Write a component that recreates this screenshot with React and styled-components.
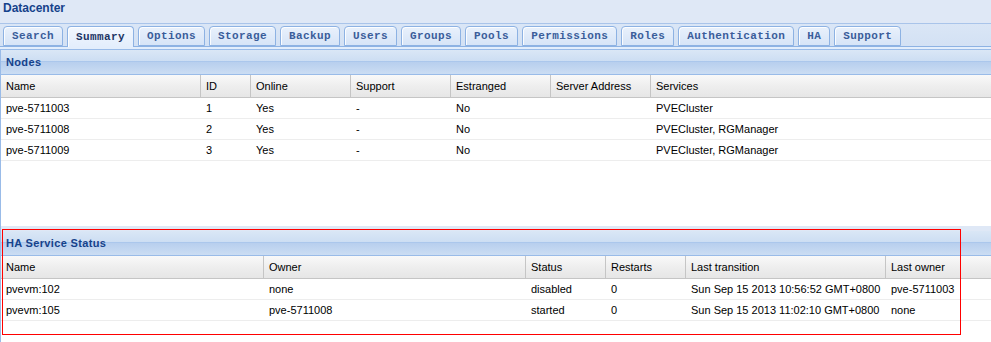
import React from "react";
import styled, { createGlobalStyle } from "styled-components";

const GlobalStyle = createGlobalStyle`
  html, body {
    margin: 0;
    padding: 0;
    background: #fff;
    overflow: hidden;
  }
`;

const tabs = [
  "Search",
  "Summary",
  "Options",
  "Storage",
  "Backup",
  "Users",
  "Groups",
  "Pools",
  "Permissions",
  "Roles",
  "Authentication",
  "HA",
  "Support",
];

const nodeCols = [
  { title: "Name", width: 200 },
  { title: "ID", width: 50 },
  { title: "Online", width: 100 },
  { title: "Support", width: 100 },
  { title: "Estranged", width: 100 },
  { title: "Server Address", width: 100 },
  { title: "Services" },
];

const nodeRows = [
  ["pve-5711003", "1", "Yes", "-", "No", "", "PVECluster"],
  ["pve-5711008", "2", "Yes", "-", "No", "", "PVECluster, RGManager"],
  ["pve-5711009", "3", "Yes", "-", "No", "", "PVECluster, RGManager"],
];

const haCols = [
  { title: "Name", width: 263 },
  { title: "Owner", width: 262 },
  { title: "Status", width: 80 },
  { title: "Restarts", width: 80 },
  { title: "Last transition", width: 200 },
  { title: "Last owner" },
];

const haRows = [
  ["pvevm:102", "none", "disabled", "0", "Sun Sep 15 2013 10:56:52 GMT+0800", "pve-5711003"],
  ["pvevm:105", "pve-5711008", "started", "0", "Sun Sep 15 2013 11:02:10 GMT+0800", "none"],
];

const Page = styled.div`
  width: 991px;
  height: 342px;
  display: flex;
  flex-direction: column;
  font-family: "Liberation Sans", Arial, sans-serif;
  font-size: 11px;
  background: #dfe8f6;
`;

const TitleBar = styled.div`
  height: 24px;
  box-sizing: border-box;
  padding: 1px 0 0 3px;
  font-weight: bold;
  font-size: 12px;
  color: #15428b;
  line-height: 14px;
  background: #dfe8f6;
  border-bottom: 1px solid #a9c4ea;
`;

const TabBar = styled.div`
  height: 22px;
  box-sizing: border-box;
  display: flex;
  align-items: flex-end;
  gap: 4px;
  padding-left: 3px;
  background: linear-gradient(#dae6f6, #d3e1f4);
`;

const Tab = styled.div`
  position: relative;
  z-index: ${(p) => (p.$active ? 2 : 1)};
  height: ${(p) => (p.$active ? "21px" : "20px")};
  margin-bottom: ${(p) => (p.$active ? "-1px" : "0")};
  box-sizing: border-box;
  padding: 0 8px;
  display: flex;
  align-items: center;
  border: 1px solid #8db2e3;
  border-bottom: ${(p) => (p.$active ? "none" : "1px solid #8db2e3")};
  border-radius: 4px 4px 0 0;
  box-shadow: inset 1px 1px 0 rgba(255, 255, 255, 0.85);
  background: ${(p) =>
    p.$active
      ? "linear-gradient(#f3f8fe, #e3eefc)"
      : "linear-gradient(#e9f1fc, #d6e4f7)"};
  font-family: "Liberation Mono", "Courier New", monospace;
  font-weight: bold;
  font-size: 11px;
  letter-spacing: 0.4px;
  color: ${(p) => (p.$active ? "#1d3564" : "#3a5d9a")};
  white-space: nowrap;
`;

const TabStrip = styled.div`
  height: 2px;
  border-top: 1px solid #8db2e3;
  border-bottom: 1px solid #99bbe8;
  background: #e3eefc;
`;

const Body = styled.div`
  flex: 1;
  display: flex;
  flex-direction: column;
  border-left: 1px solid #99bbe8;
  min-height: 0;
`;

const Panel = styled.section`
  position: relative;
  display: flex;
  flex-direction: column;
  background: #fff;
  height: ${(p) => (p.$height ? `${p.$height}px` : "auto")};
  flex: ${(p) => (p.$height ? "none" : "1")};
`;

const PanelHeader = styled.div`
  height: 25px;
  box-sizing: border-box;
  padding-left: 5px;
  display: flex;
  align-items: center;
  font-weight: bold;
  letter-spacing: 0.35px;
  color: #15428b;
  border-bottom: 1px solid #99bbe8;
  background: linear-gradient(
    #dae7f6,
    #cddef3 45%,
    #abc7ec 46%,
    #abc7ec 50%,
    #b8cfee 51%,
    #cbddf3
  );
`;

const Splitter = styled.div`
  height: 5px;
  background: #dfe8f6;
`;

const Row = styled.div`
  display: flex;
  height: ${(p) => (p.$head ? "23px" : "21px")};
  box-sizing: border-box;
  border-bottom: 1px solid ${(p) => (p.$head ? "#c5c5c5" : "#ededed")};
  background: ${(p) =>
    p.$head ? "linear-gradient(#f9f9f9, #eeeeee 50%, #e6e6e6)" : "#fff"};
`;

const Cell = styled.div`
  box-sizing: border-box;
  flex: ${(p) => (p.$width ? `0 0 ${p.$width}px` : "1")};
  padding-left: 5px;
  display: flex;
  align-items: center;
  color: #000;
  white-space: nowrap;
  overflow: hidden;
  border-right: ${(p) =>
    p.$head && p.$width ? "1px solid #c5c5c5" : "none"};
`;

const Highlight = styled.div`
  position: absolute;
  top: -2px;
  left: 1px;
  width: 959px;
  height: 106px;
  box-sizing: border-box;
  border: 1px solid #ff0000;
  pointer-events: none;
`;

const Grid = ({ cols, rows }) => (
  <div>
    <Row $head>
      {cols.map((c) => (
        <Cell key={c.title} $head $width={c.width}>
          {c.title}
        </Cell>
      ))}
    </Row>
    {rows.map((r, i) => (
      <Row key={i}>
        {r.map((v, j) => (
          <Cell key={j} $width={cols[j].width}>
            {v}
          </Cell>
        ))}
      </Row>
    ))}
  </div>
);

export default function App() {
  return (
    <>
      <GlobalStyle />
      <Page>
        <TitleBar>Datacenter</TitleBar>
        <TabBar>
          {tabs.map((t) => (
            <Tab key={t} $active={t === "Summary"}>
              {t}
            </Tab>
          ))}
        </TabBar>
        <TabStrip />
        <Body>
          <Panel $height={176}>
            <PanelHeader>Nodes</PanelHeader>
            <Grid cols={nodeCols} rows={nodeRows} />
          </Panel>
          <Splitter />
          <Panel>
            <PanelHeader>HA Service Status</PanelHeader>
            <Grid cols={haCols} rows={haRows} />
            <Highlight />
          </Panel>
        </Body>
      </Page>
    </>
  );
}
